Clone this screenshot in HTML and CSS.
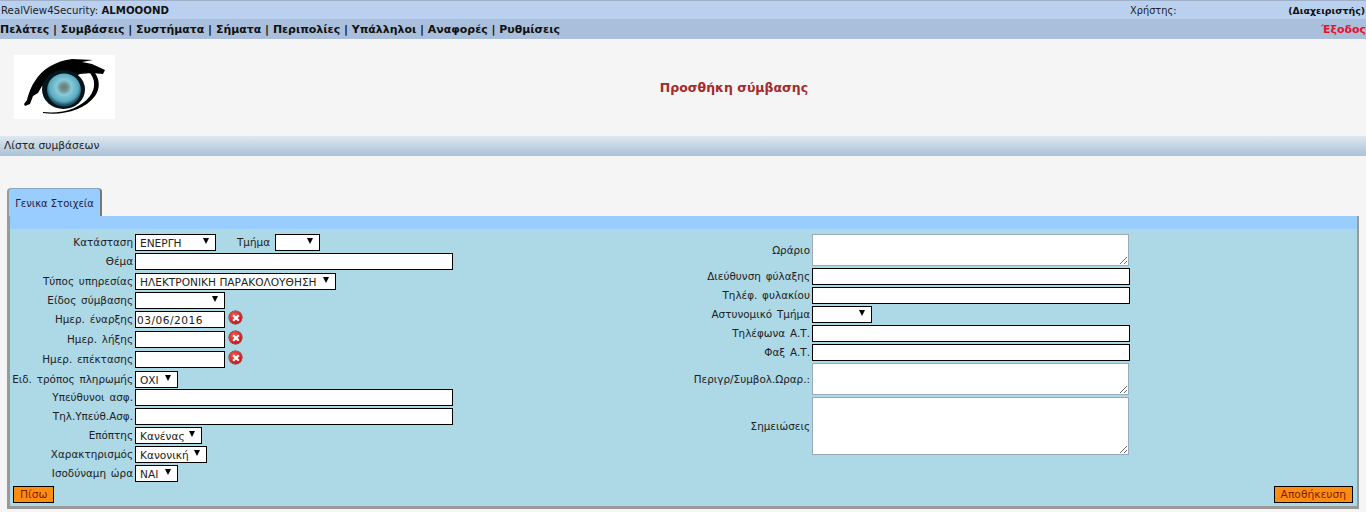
FILE: index.html
```html
<!DOCTYPE html>
<html lang="el">
<head>
<meta charset="utf-8">
<title>Προσθήκη σύμβασης</title>
<link rel="stylesheet" href="styles.css">
</head>
<body>
<div class="topbar">
  <div class="brand">RealView4Security: <b>ALMOOOND</b></div>
  <div class="user"><span>Χρήστης:</span><b>(Διαχειριστής)</b></div>
</div>
<nav class="nav">
  <div class="links"><a>Πελάτες</a> | <a>Συμβάσεις</a> | <a>Συστήματα</a> | <a>Σήματα</a> | <a>Περιπολίες</a> | <a>Υπάλληλοι</a> | <a>Αναφορές</a> | <a>Ρυθμίσεις</a></div>
  <a class="exit">Έξοδος</a>
</nav>
<header class="head">
  <div class="logo">
    <svg width="101" height="64" viewBox="0 0 101 64">
      <defs>
        <radialGradient id="iris" cx="50%" cy="42%" r="54%">
          <stop offset="0" stop-color="#6f7b79"/>
          <stop offset="0.2" stop-color="#70908f"/>
          <stop offset="0.42" stop-color="#86cbd8"/>
          <stop offset="0.8" stop-color="#58a9c1"/>
          <stop offset="1" stop-color="#1f4d60"/>
        </radialGradient>
      </defs>
      <path d="M10 49 L13 45 C15 37 18 30 21 26 C28 14 42 6 58 4 L79 5 L68 7 L78 9 L91 15 L89 19 L78 18 L66 19 L40 30 L28 31 L24 38 L19 41 L16 49 L11 51 Z" fill="#000"/>
      <ellipse cx="49.500" cy="34.500" rx="21.500" ry="19.500" fill="#06141b"/>
      <ellipse cx="50" cy="35" rx="17" ry="16.500" fill="url(#iris)"/>
      <path d="M29 57 C48 59 66 54 76 41 C82 33 81 24 76 18 L81 18 C86 25 86 34 81 41 C71 55 48 61 29 58 Z" fill="#000"/>
    </svg>
  </div>
  <h1 class="title">Προσθήκη σύμβασης</h1>
</header>
<div class="crumb">Λίστα συμβάσεων</div>
<main class="main">
  <div class="tab">Γενικα Στοιχεία</div>
  <section class="panel">
    <div class="strip"></div>
    <form class="form">
      <div class="col col-left">
        <div class="row">
          <label>Κατάσταση</label>
          <span class="sel w81"><select><option>ΕΝΕΡΓΗ</option></select></span>
          <label class="inline">Τμήμα</label>
          <span class="sel w45"><select><option></option></select></span>
        </div>
        <div class="row tall"><label>Θέμα</label><input class="w318" type="text"></div>
        <div class="row"><label>Τύπος υπηρεσίας</label><span class="sel w201"><select><option>ΗΛΕΚΤΡΟΝΙΚΗ ΠΑΡΑΚΟΛΟΥΘΗΣΗ</option></select></span></div>
        <div class="row"><label>Είδος σύμβασης</label><span class="sel w90"><select><option></option></select></span></div>
        <div class="row tall"><label>Ημερ. έναρξης</label><input class="w90" type="text" value="03/06/2016"><i class="clear"></i></div>
        <div class="row tall"><label>Ημερ. λήξης</label><input class="w90" type="text"><i class="clear"></i></div>
        <div class="row tall"><label>Ημερ. επέκτασης</label><input class="w90" type="text"><i class="clear"></i></div>
        <div class="row short"><label>Ειδ. τρόπος πληρωμής</label><span class="sel w43"><select><option>ΟΧΙ</option></select></span></div>
        <div class="row"><label>Υπεύθυνοι ασφ.</label><input class="w318" type="text"></div>
        <div class="row"><label>Τηλ.Υπεύθ.Ασφ.</label><input class="w318" type="text"></div>
        <div class="row"><label>Επόπτης</label><span class="sel w67"><select><option>Κανένας</option></select></span></div>
        <div class="row"><label>Χαρακτηρισμός</label><span class="sel w72"><select><option>Κανονική</option></select></span></div>
        <div class="row"><label>Ισοδύναμη ώρα</label><span class="sel w43"><select><option>ΝΑΙ</option></select></span></div>
      </div>
      <div class="col col-right">
        <div class="row ta-row"><label>Ωράριο</label><textarea class="ta"></textarea></div>
        <div class="row"><label>Διεύθυνση φύλαξης</label><input class="w318" type="text"></div>
        <div class="row"><label>Τηλέφ. φυλακίου</label><input class="w318" type="text"></div>
        <div class="row"><label>Αστυνομικό Τμήμα</label><span class="sel w60"><select><option></option></select></span></div>
        <div class="row"><label>Τηλέφωνα Α.Τ.</label><input class="w318" type="text"></div>
        <div class="row"><label>Φαξ Α.Τ.</label><input class="w318" type="text"></div>
        <div class="row ta-row"><label>Περιγρ/Συμβολ.Ωραρ.:</label><textarea class="ta"></textarea></div>
        <div class="row ta-big"><label>Σημειώσεις</label><textarea class="ta"></textarea></div>
      </div>
    </form>
    <div class="actions">
      <button class="btn" type="button">Πίσω</button>
      <button class="btn" type="button">Αποθήκευση</button>
    </div>
  </section>
</main>
</body>
</html>
```
FILE: styles.css
```css
* { box-sizing: border-box; }
html, body { margin: 0; padding: 0; }
body {
  width: 1366px;
  height: 512px;
  overflow: hidden;
  background: #f5f5f5;
  font-family: "DejaVu Sans", Verdana, sans-serif;
  font-size: 10.400px;
  color: #222;
}
.topbar {
  height: 19px;
  display: flex;
  align-items: center;
  justify-content: space-between;
  padding: 0 1px;
  background: #b9d0ef;
  border-top: 1px solid #9fb0c8;
  font-size: 10.200px;
}
.brand b { color: #111; }
.user {
  width: 235px;
  display: flex;
  justify-content: space-between;
  font-size: 9.800px;
}
.user b { color: #111; font-size: 9.400px; }
.nav {
  height: 20px;
  display: flex;
  align-items: center;
  justify-content: space-between;
  background: #aabfdb;
  font-weight: bold;
  font-size: 10.940px;
  color: #111;
}
.exit { color: #e8112d; }
.head {
  height: 97px;
  position: relative;
  display: flex;
  align-items: center;
  justify-content: center;
  padding-left: 102px;
}
.logo {
  position: absolute;
  left: 14px;
  top: 16px;
  width: 101px;
  height: 64px;
  background: #fff;
}
.logo svg { display: block; }
.title {
  margin: 0;
  font-size: 12.500px;
  font-weight: bold;
  color: #a52a2a;
}
.crumb {
  height: 20px;
  line-height: 20px;
  padding-left: 4px;
  background: linear-gradient(#dfe8ef, #a9c1d6);
  font-size: 10.670px;
  color: #222;
}
.main { padding: 32px 0 0 7px; }
.tab {
  width: 95px;
  height: 28px;
  line-height: 29px;
  text-align: center;
  background: #99ccff;
  border-top: 1px solid #88a8c8;
  border-left: 2px solid #999;
  border-right: 2px solid #777;
  border-radius: 4px 4px 0 0;
  font-size: 10px;
  color: #224;
}
.panel {
  width: 1352px;
  height: 293px;
  display: flex;
  flex-direction: column;
  background: #add8e6;
  border-left: 3px solid #999;
  border-right: 2px solid #999;
  border-bottom: 3px solid #999;
}
.strip { height: 13px; background: #99ccff; flex: none; }
.form {
  display: flex;
  padding-top: 4px;
  flex: none;
}
.col { display: flex; flex-direction: column; }
.col-left { width: 678px; }
.row {
  height: 19px;
  padding-top: 1px;
  display: flex;
  align-items: flex-start;
}
.row.tall { height: 20px; }
.row.short { height: 18px; }
.row.ta-row { height: 34px; }
.row.ta-big { height: 60px; }
label {
  flex: none;
  width: 123px;
  line-height: 17px;
  text-align: right;
  white-space: nowrap;
  word-spacing: 1.500px;
  margin-right: 2px;
  color: #222;
}
.col-right label { width: 122px; }
.ta-row label, .ta-big label { align-self: center; }
label.inline { width: auto; margin: 0 5px 0 21px; }
input, select, textarea {
  font-family: inherit;
  font-size: 10.600px;
  color: #222;
  background: #fff;
  border-radius: 0;
  margin: 0;
}
input {
  height: 17px;
  padding: 0 1px;
  border: 1px solid #000;
  letter-spacing: 0.500px;
}
.sel {
  position: relative;
  display: block;
  height: 17px;
  background: #fff;
  flex: none;
}
.sel select {
  display: block;
  width: 100%;
  height: 17px;
  padding: 0 14px 0 4px;
  border: 1px solid #000;
  appearance: none;
  -webkit-appearance: none;
}
.sel::after {
  content: "";
  position: absolute;
  right: 7px;
  top: 4px;
  border-left: 3px solid transparent;
  border-right: 3px solid transparent;
  border-top: 6px solid #000;
  pointer-events: none;
}
.w43 { width: 43px; }
.w45 { width: 45px; }
.w60 { width: 60px; }
.w67 { width: 67px; }
.w72 { width: 72px; }
.w81 { width: 81px; }
.w90 { width: 90px; }
.w201 { width: 201px; }
.w318 { width: 318px; }
.ta {
  width: 317px;
  height: 32px;
  margin: 0;
  padding: 2px;
  border: 1px solid #9ab;
  flex: none;
  resize: vertical;
}
.ta-big .ta { height: 58px; }
.clear {
  position: relative;
  flex: none;
  width: 13px;
  height: 13px;
  margin: 0 0 0 4px;
  border-radius: 50%;
  background: radial-gradient(circle at 40% 35%, #f0605a, #c81818 70%, #8c1010);
  box-shadow: 0 0 0 0.500px #7a0d0d;
}
.clear::before,
.clear::after {
  content: "";
  position: absolute;
  left: 2.500px;
  top: 5.500px;
  width: 8px;
  height: 2px;
  background: #fff;
  transform: rotate(45deg);
}
.clear::after { transform: rotate(-45deg); }
.actions {
  display: flex;
  justify-content: space-between;
  padding: 0 4px 0 3px;
  margin-top: 3px;
}
.btn {
  height: 17px;
  padding: 0 6px;
  border: 1px solid #000;
  background: #ff8c11;
  color: #7a1f00;
  font-family: inherit;
  font-size: 10.700px;
  border-radius: 0;
}
```
